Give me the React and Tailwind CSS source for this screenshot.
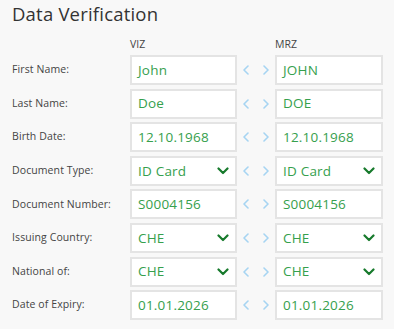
import React from 'react';

const rows = [
  { label: 'First Name:', viz: 'John', mrz: 'JOHN' },
  { label: 'Last Name:', viz: 'Doe', mrz: 'DOE' },
  { label: 'Birth Date:', viz: '12.10.1968', mrz: '12.10.1968' },
  { label: 'Document Type:', viz: 'ID Card', mrz: 'ID Card', select: true },
  { label: 'Document Number:', viz: 'S0004156', mrz: 'S0004156' },
  { label: 'Issuing Country:', viz: 'CHE', mrz: 'CHE', select: true },
  { label: 'National of:', viz: 'CHE', mrz: 'CHE', select: true },
  { label: 'Date of Expiry:', viz: '01.01.2026', mrz: '01.01.2026' },
];

const Chevron = () => (
  <svg width="12" height="8" viewBox="0 0 12 8" className="shrink-0">
    <path d="M1.5 1.5 L6 6 L10.5 1.5" fill="none" stroke="#177a2c" strokeWidth="2.2" strokeLinecap="round" strokeLinejoin="round" />
  </svg>
);

const Arrow = ({ dir }) => (
  <svg width="6" height="10" viewBox="0 0 6 10">
    <path
      d={dir === 'left' ? 'M5 1 L1 5 L5 9' : 'M1 1 L5 5 L1 9'}
      fill="none"
      stroke="#a6d4f2"
      strokeWidth="1.6"
      strokeLinecap="round"
      strokeLinejoin="round"
    />
  </svg>
);

const Field = ({ value, select }) => (
  <div className="h-[30px] bg-white border-2 border-[#e4e4e4] flex items-center justify-between pl-[6px] pr-[6px]">
    <span className="text-[13.5px] text-[#36a04d] tracking-[0.2px]">{value}</span>
    {select && <Chevron />}
  </div>
);

export default function App() {
  return (
    <div className="w-[394px] h-[329px] bg-[#f8f8f8] text-[#3c3c3c] overflow-hidden" style={{ fontFamily: '"Open Sans", "Liberation Sans", sans-serif' }}>
      <h1 className="pl-[12px] pt-[1px] text-[18.5px] leading-[26px] tracking-[0.2px] text-[#333]">Data Verification</h1>

      <div className="grid grid-cols-[118px_107px_38px_108px] pl-[12px] mt-[10px]">
        <div />
        <div className="text-[10.5px] leading-[14px] text-[#444]">VIZ</div>
        <div />
        <div className="text-[10.5px] leading-[14px] text-[#444]">MRZ</div>
      </div>

      <div className="grid grid-cols-[118px_107px_38px_108px] gap-y-[3.6px] pl-[12px] mt-[4px]">
        {rows.map((r) => (
          <React.Fragment key={r.label}>
            <div className="flex items-center text-[10.5px] text-[#444] tracking-[0.1px]">{r.label}</div>
            <Field value={r.viz} select={r.select} />
            <div className="flex items-center justify-center gap-[14px]">
              <Arrow dir="left" />
              <Arrow dir="right" />
            </div>
            <Field value={r.mrz} select={r.select} />
          </React.Fragment>
        ))}
      </div>
    </div>
  );
}
